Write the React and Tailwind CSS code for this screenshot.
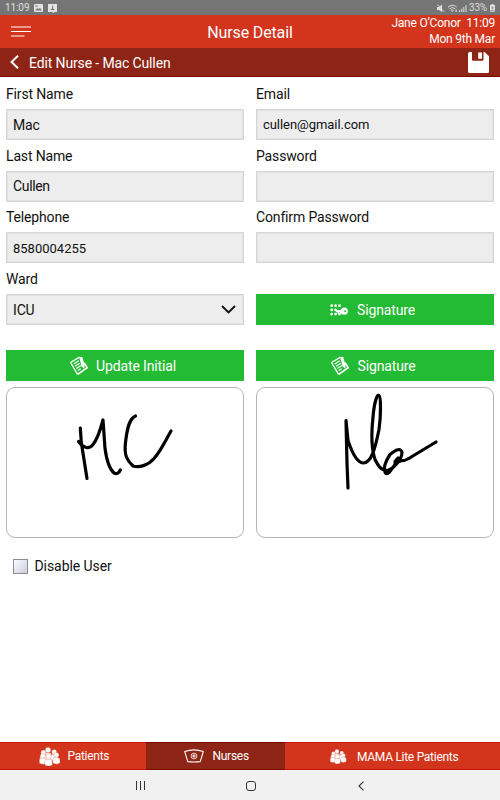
function Field({ label, value = '', className = '', children }) {
  return (
    <div className="h-[61.7px]">
      <p className="h-[24px] text-sm leading-[18px] tracking-[-.15px] text-[#111]">{label}</p>
      <div
        className={`flex h-[31px] items-center justify-between border border-[#d6d6d6] bg-[#ededed] pl-[6px] pr-[7px] text-[#111] shadow-[inset_0_0_0_1px_#e3e3e3] ${className || 'text-sm tracking-[-.15px]'}`}
      >
        <span>{value}</span>
        {children}
      </div>
    </div>
  )
}

function GreenButton({ icon, children, className = '' }) {
  return (
    <button
      className={`flex h-[31px] w-full items-center justify-center bg-[#24bb34] pr-[5px] text-sm tracking-[-.15px] text-white ${className}`}
    >
      {icon}
      {children}
    </button>
  )
}

function NoteIcon() {
  return (
    <svg width="20" height="20" viewBox="0 0 20 20" fill="none" stroke="#fff">
      <path d="M1.5 6.5 10.5 1.2M1.5 6.5 8.6 18.4" strokeWidth="1.4" />
      <path d="m8.6 18.4 9.6-6.6-3.1-5" strokeWidth="1.7" />
      <path d="m4.6 8 5.2-3.2M6 10.2l4.8-3M7.3 12.4l4.6-2.9M8.7 14.6l3-1.9" strokeWidth="1.2" />
      <path d="m10.2 1.3 3-.6 2.4 8.6-.4 3.5-2.6-2.2z" fill="#fff" stroke="none" />
    </svg>
  )
}

function KeypadIcon() {
  return (
    <svg width="18" height="12" viewBox="0 0 18 12" fill="#fff">
      {[1.7, 5.6, 9.5].map((x) => <circle key={x} cx={x} cy="1.7" r="1.4" />)}
      {[1.7, 5.6].map((x) => <circle key={x} cx={x} cy="5.9" r="1.4" />)}
      {[1.7, 5.6, 9.5].map((x) => <circle key={x} cx={x} cy="10.1" r="1.4" />)}
      <path d="M6 6h6v2.2H6zM7.5 7h1.4v2.4H7.5zM9.8 7h1.3v2.4H9.8z" />
      <path
        fillRule="evenodd"
        d="M14.3 3.6a3.6 3.6 0 1 1 0 7.2 3.6 3.6 0 0 1 0-7.2m.9 2.6a1 1 0 1 0 0 2 1 1 0 0 0 0-2"
      />
    </svg>
  )
}

function Person({ x, y, s = 1 }) {
  return (
    <g transform={`translate(${x} ${y}) scale(${s})`}>
      <path d="M-4 9V5.6Q-4 2.4 0 2.4t4 3.2V9Q0 11.4-4 9" />
      <circle cx="0" cy="0" r="2.8" />
    </g>
  )
}

function GroupIcon({ width, height }) {
  return (
    <svg width={width} height={height} viewBox="0 0 22 19" fill="#fff">
      <g stroke="#d2351c" strokeWidth=".3">
        <Person x={9} y={3} />
        <Person x={15.2} y={4.9} s={0.9} />
        <Person x={4.4} y={5.6} s={0.9} />
        <Person x={17.4} y={8} s={0.9} />
        <Person x={3.8} y={8.6} s={0.85} />
        <Person x={9.5} y={9.4} s={0.95} />
      </g>
    </svg>
  )
}

function NurseCapIcon() {
  return (
    <svg width="20" height="14" viewBox="0 0 20 14" fill="none" stroke="#fff" strokeWidth="1.1">
      <path d="M.7 2.6Q10-.8 19.3 2.6L16.2 12.6Q10 13.4 3.8 12.6z" strokeLinejoin="round" />
      <circle cx="10" cy="7" r="2.9" strokeWidth=".8" />
      <path d="M10 5.2v3.6M8.2 7h3.6" />
    </svg>
  )
}

function StatusBar() {
  return (
    <div className="flex h-[15px] items-center justify-between bg-[#757575] pl-[5px] pr-[5px] pt-[1px] text-[10px] leading-none text-[#dedede]">
      <div className="flex items-center">
        <span className="w-[29px] tracking-[-.1px]">11:09</span>
        <svg width="9" height="8" viewBox="0 0 9 8">
          <rect width="9" height="8" rx="1" fill="#e4e4e4" />
          <path d="M1.2 6.6 3.2 4l1.5 1.3L6 3.8l1.8 2.8zM1.4 1.4h2.3v1.4H1.4z" fill="#757575" />
        </svg>
        <svg className="ml-[5px]" width="9" height="9" viewBox="0 0 9 9">
          <path d="M0 0h9v8H6.5L5.5 9 4 8H0z" fill="#e4e4e4" />
          <path d="M4.1 1.4h1v3l2 1.6H2l2.1-1.5z" fill="#757575" />
        </svg>
      </div>
      <div className="flex items-center">
        <svg width="30" height="9" viewBox="0 0 30 9" fill="#dedede">
          <path d="M0 3h2l3-2.5v7.5L2 6H0z" />
          <path d="m.5.7 6.6 7.1" stroke="#dedede" />
          <path d="M11 3.2q4.4-4 8.8 0M12.4 4.8q3-2.6 5.8 0M13.8 6.4q1.4-1.2 2.8 0" fill="none" stroke="#dedede" />
          <path d="m14.2 7 1 1 1-1zM18.5 5.5h1.2V8h-1.2zM22 6.3h1.2V8H22zM24.2 4.7h1.1V8h-1.1zM26.3 3h1v5h-1zM28.5 1h1v7h-1z" />
        </svg>
        <span className="ml-[2px] tracking-[-.2px]">33%</span>
        <svg className="ml-[3px]" width="5" height="8" viewBox="0 0 5 8" fill="#dedede">
          <path d="M1.4 0h2.2v1H5v5.6H0V1h1.4zM0 7.2h5V8H0z" />
          <path d="M2.7 2 1.4 4.2h1L2 6l1.7-2.5h-1z" fill="#757575" />
        </svg>
      </div>
    </div>
  )
}

export default function App() {
  return (
    <div className="flex h-[800px] w-[500px] flex-col overflow-hidden bg-white font-['Roboto',sans-serif]">
      <StatusBar />

      {/* Title bar */}
      <header className="grid h-[33px] grid-cols-[117px_1fr_117px] items-center bg-[#d2351c] pl-[11px] pr-[5px] text-white">
        <svg width="20" height="11" viewBox="0 0 20 11" stroke="#fff" strokeWidth="1.2">
          <path d="M0 1h20M0 5.5h20M0 10h13.5" />
        </svg>
        <h1 className="pr-[6px] pt-[2px] text-center text-base leading-5 tracking-[-.14px]">Nurse Detail</h1>
        <div className="text-right text-xs leading-[15.5px] tracking-[-.22px]">
          <p className="whitespace-pre">Jane O’Conor  11:09</p>
          <p>Mon 9th Mar</p>
        </div>
      </header>

      {/* Edit bar */}
      <div className="flex h-[29px] items-center border-b border-[#7c0500] bg-[#8d2415] pl-[10px] pr-[11px] text-white">
        <svg width="9" height="14" viewBox="0 0 9 14" fill="none" stroke="#fff" strokeWidth="2">
          <path d="M8 .8 1.6 7 8 13.2" />
        </svg>
        <h2 className="ml-[10px] flex-1 pt-[1px] text-sm tracking-[-.13px]">Edit Nurse - Mac Cullen</h2>
        <svg className="mt-[1px]" width="21" height="21" viewBox="0 0 21 21">
          <path
            fillRule="evenodd"
            d="M1.5 0H4v7.8q0 1 1 1h9.5q1 0 1-1V0h1L21 4.2v15.3q0 1.5-1.5 1.5h-18Q0 21 0 19.5v-18Q0 0 1.5 0M10.2.5h3.8v6.3h-3.8z"
            fill="#fff"
          />
        </svg>
      </div>

      <main className="flex-1 px-[6px] pt-[8px]">
        <div className="grid grid-cols-2 gap-x-3">
          <Field label="First Name" value="Mac" />
          <Field label="Email" value="cullen@gmail.com" className="pt-[1px] text-[13px] tracking-[-.05px]" />
          <Field label="Last Name" value="Cullen" className="text-sm tracking-[-.35px]" />
          <Field label="Password" />
          <Field label="Telephone" value="8580004255" className="pt-[1px] text-[13px]" />
          <Field label="Confirm Password" />
          <Field label="Ward" value="ICU">
            <svg width="15" height="9" viewBox="0 0 15 9" fill="none" stroke="#111" strokeWidth="1.9">
              <path d="m1 1 6.5 6.5L14 1" />
            </svg>
          </Field>
          <GreenButton className="mt-[24px] gap-[9px]" icon={<KeypadIcon />}>Signature</GreenButton>
        </div>

        <div className="mt-[18.7px] grid grid-cols-2 gap-x-3 gap-y-[6px]">
          <GreenButton className="gap-[7px]" icon={<NoteIcon />}>Update Initial</GreenButton>
          <GreenButton className="gap-[8px]" icon={<NoteIcon />}>Signature</GreenButton>
          <div className="h-[151px] rounded-[9px] border border-[#b5b5b5]">
            <svg width="236" height="149" viewBox="7 388.5 236 149" fill="none" stroke="#000" strokeWidth="3.2" strokeLinecap="round" strokeLinejoin="round">
              <path d="M80.3 428.5 81.3 443 87 479M78.5 442C84 449 89 450 93 445 98 439 101 428 103 420.5L105 449C107 463 111 471 114 473.5 117 475 119 473.5 120.3 470.5" />
              <path d="M135.5 416.5C129 419 127 430 125.5 443 124 456 127 461 133 466.5 139 468.5 148 466 154 459 161 451 166 440 171 431.5" />
            </svg>
          </div>
          <div className="h-[151px] rounded-[9px] border border-[#b5b5b5]">
            <svg width="236" height="149" viewBox="257 388.5 236 149" fill="none" stroke="#000" strokeWidth="3.2" strokeLinecap="round" strokeLinejoin="round">
              <path d="M348 488.5 347 464 346 421 348 441C352 453 357 463 363 463.5 371 464 375 450 379 430 381 416 381 397 379 396 377 394 374 404 373 418 371 436 371 448 375 460 379 468 382 471 387 471 393 470 402 460 402 453 401 448 396 450 390 455 386 461 382 470 386 474 390 475 393 466 400 459L395 464 401 461C404 462 409 459 412 457L436 442.5" />
              <path d="m395 462 3-3.5 1.5 3z" fill="#000" />
            </svg>
          </div>
        </div>

        <label className="mt-[18px] flex items-center gap-[6.5px] pl-[6.5px] text-sm leading-5 tracking-[-.07px] text-[#111]">
          <span className="h-[15.5px] w-[15.5px] border border-[#8c8c98] bg-linear-to-br from-[#fafaff] to-[#ceceda]" />
          Disable User
        </label>
      </main>

      {/* Bottom tabs */}
      <nav className="grid h-[28px] grid-cols-[145.5px_139px_1fr] text-xs tracking-[-.28px] text-white">
        <div className="flex items-center gap-[7px] border-y border-[#c61405] bg-[#d2351c] pl-[38.5px]">
          <GroupIcon width="22" height="19" />
          Patients
        </div>
        <div className="flex items-center gap-[9px] border-y border-[#7c0500] bg-[#8d2415] pl-[38px]">
          <NurseCapIcon />
          Nurses
        </div>
        <div className="flex items-center gap-[10px] border-y border-[#c61405] bg-[#d2351c] pl-[45.5px] pt-[1px]">
          <GroupIcon width="17" height="15" />
          MAMA Lite Patients
        </div>
      </nav>

      {/* Android navigation */}
      <div className="flex h-[30px] items-center bg-[#f1f1f1] pl-[136px] pt-[1px]">
        <svg width="9" height="9" viewBox="0 0 9 9" stroke="#333">
          <path d="M.5 0v9M4.5 0v9M8.5 0v9" />
        </svg>
        <svg className="ml-[101px]" width="10" height="10" viewBox="0 0 10 10" fill="none" stroke="#333">
          <rect x=".5" y=".5" width="9" height="9" rx="2.5" />
        </svg>
        <svg className="ml-[102px]" width="6" height="10" viewBox="0 0 6 10" fill="none" stroke="#333" strokeWidth="1.1">
          <path d="M5.5.7 1 5l4.5 4.3" />
        </svg>
      </div>
    </div>
  )
}
